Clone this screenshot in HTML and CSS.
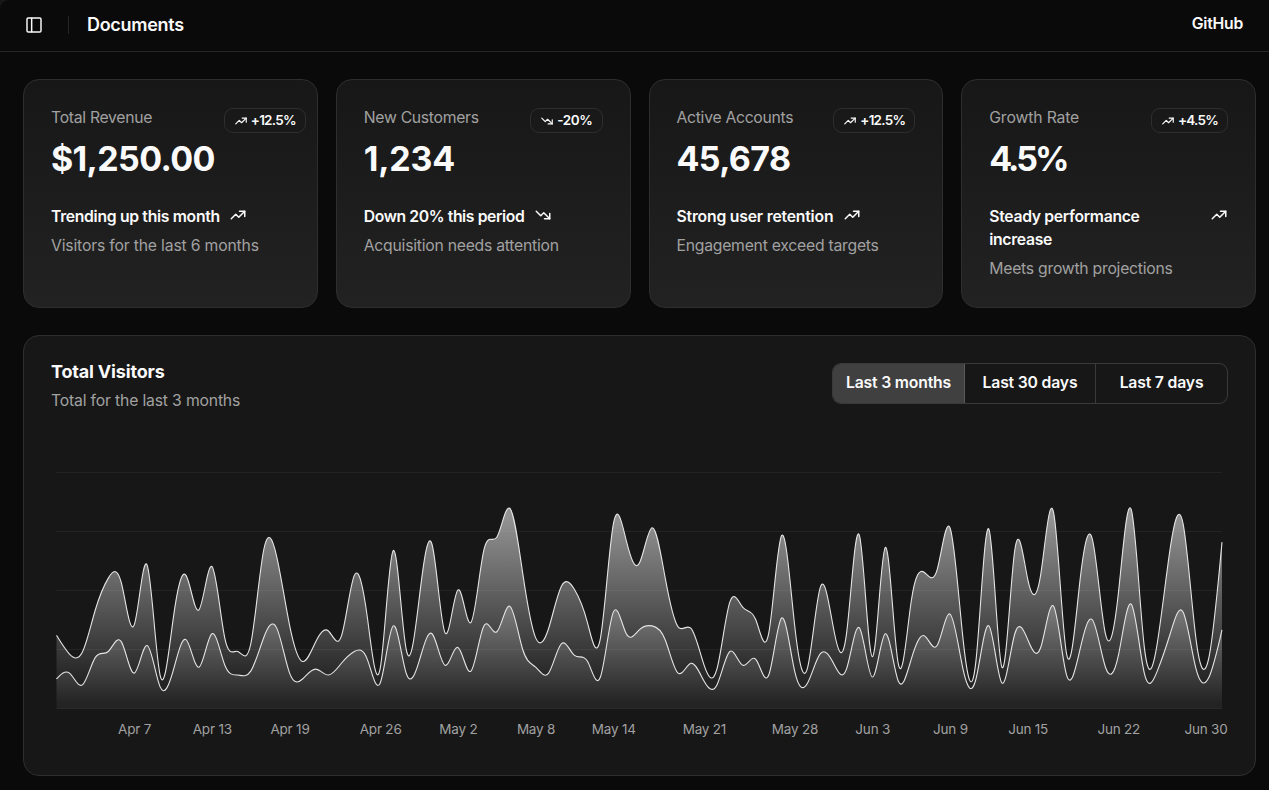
FILE: index.html
```html
<!DOCTYPE html>
<html lang="en">
<head>
<meta charset="utf-8">
<title>Documents</title>
<link rel="stylesheet" href="styles.css">
</head>
<body>
<svg class="sprite" aria-hidden="true">
  <symbol id="up" viewBox="0 0 24 24"><path d="M3 17l6 -6l4 4l8 -8"/><path d="M14 7l7 0l0 7"/></symbol>
  <symbol id="down" viewBox="0 0 24 24"><path d="M3 7l6 6l4 -4l8 8"/><path d="M21 10l0 7l-7 0"/></symbol>
  <symbol id="panel" viewBox="0 0 24 24"><rect width="21" height="21" x="1.5" y="1.5" rx="2"/><path d="M8.5 2v20"/></symbol>
</svg>
<div class="page">
<header class="header">
  <svg class="icon panel"><use href="#panel"/></svg>
  <div class="separator"></div>
  <h1 class="page-title">Documents</h1>
  <a class="github">GitHub</a>
</header>
<main class="main">
  <section class="cards">
    <article class="card stat wide-value">
      <div class="stat-head"><div><p class="label">Total Revenue</p><p class="value">$1,250.00</p></div>
        <div class="badge"><svg class="icon"><use href="#up"/></svg><span>+12.5%</span></div></div>
      <div class="stat-foot"><p class="trend"><span>Trending up this month</span><svg class="icon"><use href="#up"/></svg></p><p class="note loose">Visitors for the last 6 months</p></div>
    </article>
    <article class="card stat">
      <div class="stat-head"><div><p class="label">New Customers</p><p class="value plain">1,234</p></div>
        <div class="badge short"><svg class="icon"><use href="#down"/></svg><span>-20%</span></div></div>
      <div class="stat-foot"><p class="trend tight"><span>Down 20% this period</span><svg class="icon"><use href="#down"/></svg></p><p class="note">Acquisition needs attention</p></div>
    </article>
    <article class="card stat">
      <div class="stat-head"><div><p class="label">Active Accounts</p><p class="value">45,678</p></div>
        <div class="badge"><svg class="icon"><use href="#up"/></svg><span>+12.5%</span></div></div>
      <div class="stat-foot"><p class="trend loose"><span>Strong user retention</span><svg class="icon"><use href="#up"/></svg></p><p class="note">Engagement exceed targets</p></div>
    </article>
    <article class="card stat">
      <div class="stat-head"><div><p class="label growth">Growth Rate</p><p class="value percent">4.5%</p></div>
        <div class="badge"><svg class="icon"><use href="#up"/></svg><span>+4.5%</span></div></div>
      <div class="stat-foot"><p class="trend split"><span>Steady performance<br>increase</span><svg class="icon"><use href="#up"/></svg></p><p class="note">Meets growth projections</p></div>
    </article>
  </section>
  <section class="card visitors">
    <div class="visitors-head">
      <div><h2 class="chart-title">Total Visitors</h2><p class="note loose">Total for the last 3 months</p></div>
      <div class="toggle">
        <button class="toggle-item active">Last 3 months</button>
        <button class="toggle-item">Last 30 days</button>
        <button class="toggle-item last">Last 7 days</button>
      </div>
    </div>
    <svg class="chart" id="chart" viewBox="0 0 1177 281"></svg>
  </section>
</main>
</div>
<script src="chart.js"></script>
</body>
</html>
```
FILE: styles.css
```css
* { box-sizing: border-box; margin: 0; padding: 0; }
body { background: #171717; color: #fafafa; font-family: Inter, "Liberation Sans", sans-serif; font-size: 15.75px; line-height: 23px; height: 790px; overflow: hidden; }
.page { height: 790px; border-top-left-radius: 9px; background: #0a0a0a; }
.sprite { display: none; }
.icon { flex: none; width: 18px; height: 18px; fill: none; stroke: currentColor; stroke-width: 2; stroke-linecap: round; stroke-linejoin: round; }
.icon.panel { width: 16px; height: 16px; margin: 0 1px; stroke-width: 2.2; }
.header { display: flex; align-items: center; height: 52px; padding: 0 26px 1px 25px; border-bottom: 1px solid #262626; }
.separator { width: 1px; height: 18px; margin: 0 18px 0 25px; background: #262626; }
.page-title { margin-bottom: 2px; font-size: 18px; font-weight: 600; letter-spacing: -0.3px; }
.github { margin: 0 0 3px auto; font-weight: 600; letter-spacing: -0.25px; }
.main { display: flex; flex-direction: column; gap: 27px; padding: 27px 13px 14px 23px; }
.cards { display: grid; grid-template-columns: repeat(4, 1fr); gap: 18px; }
.card { border: 1px solid #2e2e2e; border-radius: 16px; background: #171717; }
.stat { height: 229px; padding: 26px 27px; background: linear-gradient(#171717, #222222); }
.stat-head { display: flex; justify-content: space-between; align-items: flex-start; }
.label, .note { color: #a1a1a1; }
.label { letter-spacing: -0.3px; }
.label.growth { letter-spacing: -0.14px; }
.note { letter-spacing: -0.25px; }
.note.loose { letter-spacing: -0.18px; }
.value { margin-top: 11px; font-size: 34px; line-height: 38px; font-weight: 650; letter-spacing: -0.65px; }
.value.plain { letter-spacing: -0.2px; }
.value.percent { letter-spacing: -3px; }
.badge { display: flex; align-items: center; gap: 3px; height: 25px; margin-top: 2px; padding: 0 9px; border: 1px solid #2e2e2e; border-radius: 9px; font-size: 13.5px; line-height: 18px; font-weight: 580; letter-spacing: -0.75px; }
.badge.short { letter-spacing: -0.4px; }
.badge span { margin-bottom: 2px; }
.badge .icon { width: 14px; height: 14px; }
.wide-value .badge { margin-right: -16px; }
.stat-foot { display: flex; flex-direction: column; gap: 6px; margin-top: 27px; }
.trend { display: flex; gap: 9.5px; font-weight: 590; letter-spacing: -0.32px; }
.trend.tight { letter-spacing: -0.4px; }
.trend.loose { letter-spacing: -0.2px; }
.trend .icon { margin-top: 1px; }
.split { justify-content: space-between; }
.visitors { height: 441px; padding: 26px 27px; }
.visitors-head { display: flex; justify-content: space-between; height: 42px; }
.chart-title { margin: -1px 0 7px; font-size: 18px; line-height: 21px; font-weight: 650; letter-spacing: -0.18px; }
.toggle { display: flex; height: 41px; margin-top: 1px; border: 1px solid #3a3a3a; border-radius: 9px; overflow: hidden; }
.toggle-item { width: 131px; padding-bottom: 3px; border: 0; border-right: 1px solid #3a3a3a; background: transparent; color: #fafafa; font: 590 15.75px Inter, sans-serif; letter-spacing: -0.18px; }
.toggle-item.active { width: 132px; border-color: #5a5a5a; background: #404040; }
.toggle-item.last { border-right: 0; }
.chart { display: block; width: 1177px; height: 281px; margin-top: 59px; overflow: visible; }
.grid { stroke: #232323; stroke-width: 1; }
.line { fill: none; stroke: #e5e5e5; stroke-width: 1.1; }
.tick { fill: #a1a1a1; font-size: 13.5px; letter-spacing: -0.2px; text-anchor: middle; }
```
FILE: chart.js
```js
const desktop = [222,97,167,242,373,301,245,409,59,261,327,292,342,137,120,138,446,364,243,89,137,224,138,387,215,75,383,122,315,454,165,293,247,385,481,498,388,149,227,293,335,197,197,448,473,338,499,315,235,177,82,81,252,294,201,213,420,233,78,340,178,178,470,103,439,88,294,323,385,438,155,92,492,81,426,307,371,475,107,341,408,169,317,480,132,141,434,448,149,103,446];
const mobile = [150,180,120,260,290,340,180,320,110,190,350,210,380,220,170,190,360,410,180,150,200,170,230,290,250,130,420,180,240,380,220,310,190,420,390,520,300,210,180,330,270,240,160,490,380,400,420,350,180,230,140,120,290,220,250,170,460,190,130,280,230,200,410,160,380,140,250,370,320,480,200,150,420,130,380,350,310,520,170,290,450,210,270,530,180,190,380,490,200,160,400];
const LEFT = 5.5, WIDTH = 1165.5, BASE = 245.5, HEIGHT = 236, MAX = 1200;
const x = i => LEFT + i * WIDTH / 90;
const y = v => BASE - v * HEIGHT / MAX;

// Control points of a natural cubic spline along one axis.
function controls(p) {
  const n = p.length - 1, a = new Array(n), b = new Array(n), r = new Array(n);
  a[0] = 0; b[0] = 2; r[0] = p[0] + 2 * p[1];
  for (let i = 1; i < n - 1; i++) { a[i] = 1; b[i] = 4; r[i] = 4 * p[i] + 2 * p[i + 1]; }
  a[n - 1] = 2; b[n - 1] = 7; r[n - 1] = 8 * p[n - 1] + p[n];
  for (let i = 1; i < n; i++) { const m = a[i] / b[i - 1]; b[i] -= m; r[i] -= m * r[i - 1]; }
  a[n - 1] = r[n - 1] / b[n - 1];
  for (let i = n - 2; i >= 0; i--) a[i] = (r[i] - a[i + 1]) / b[i];
  b[n - 1] = (p[n] + a[n - 1]) / 2;
  for (let i = 0; i < n - 1; i++) b[i] = 2 * p[i + 1] - a[i + 1];
  return [a, b];
}
function curve(points) {
  const xs = points.map(p => p[0]), ys = points.map(p => p[1]);
  const cx = controls(xs), cy = controls(ys);
  let d = xs[0] + ',' + ys[0];
  for (let i = 1; i < xs.length; i++) {
    d += 'C' + [cx[0][i-1], cy[0][i-1], cx[1][i-1], cy[1][i-1], xs[i], ys[i]].map(v => v.toFixed(2)).join(',');
  }
  return d;
}
const low = mobile.map((v, i) => [x(i), y(v)]);
const high = mobile.map((v, i) => [x(i), y(v + desktop[i])]);
const lowLine = curve(low), highLine = curve(high), lowBack = curve(low.slice().reverse());
const ticks = { 6:'Apr 7', 12:'Apr 13', 18:'Apr 19', 25:'Apr 26', 31:'May 2', 37:'May 8', 43:'May 14', 50:'May 21', 57:'May 28', 63:'Jun 3', 69:'Jun 9', 75:'Jun 15', 82:'Jun 22' };
let out = '<defs>' + [['fillDesktop', 1], ['fillMobile', 0.8]].map(([id, o]) =>
  `<linearGradient id="${id}" x1="0" y1="0" x2="0" y2="1"><stop offset="5%" stop-color="#e5e5e5" stop-opacity="${o}"/><stop offset="95%" stop-color="#e5e5e5" stop-opacity="0.1"/></linearGradient>`).join('') + '</defs>';
for (let v = 0; v <= MAX; v += 300) out += `<line class="grid" x1="${LEFT}" x2="${LEFT + WIDTH}" y1="${y(v)}" y2="${y(v)}"/>`;
out += `<path fill="url(#fillMobile)" fill-opacity="0.6" d="M${lowLine}L${x(90)},${BASE}L${x(0)},${BASE}Z"/><path class="line" d="M${lowLine}"/>`;
out += `<path fill="url(#fillDesktop)" fill-opacity="0.6" d="M${highLine}L${lowBack}Z"/><path class="line" d="M${highLine}"/>`;
for (const i in ticks) out += `<text class="tick" x="${x(i) + 0.4}" y="271">${ticks[i]}</text>`;
out += '<text class="tick" x="1155" y="271">Jun 30</text>';
document.getElementById('chart').innerHTML = out;
```
